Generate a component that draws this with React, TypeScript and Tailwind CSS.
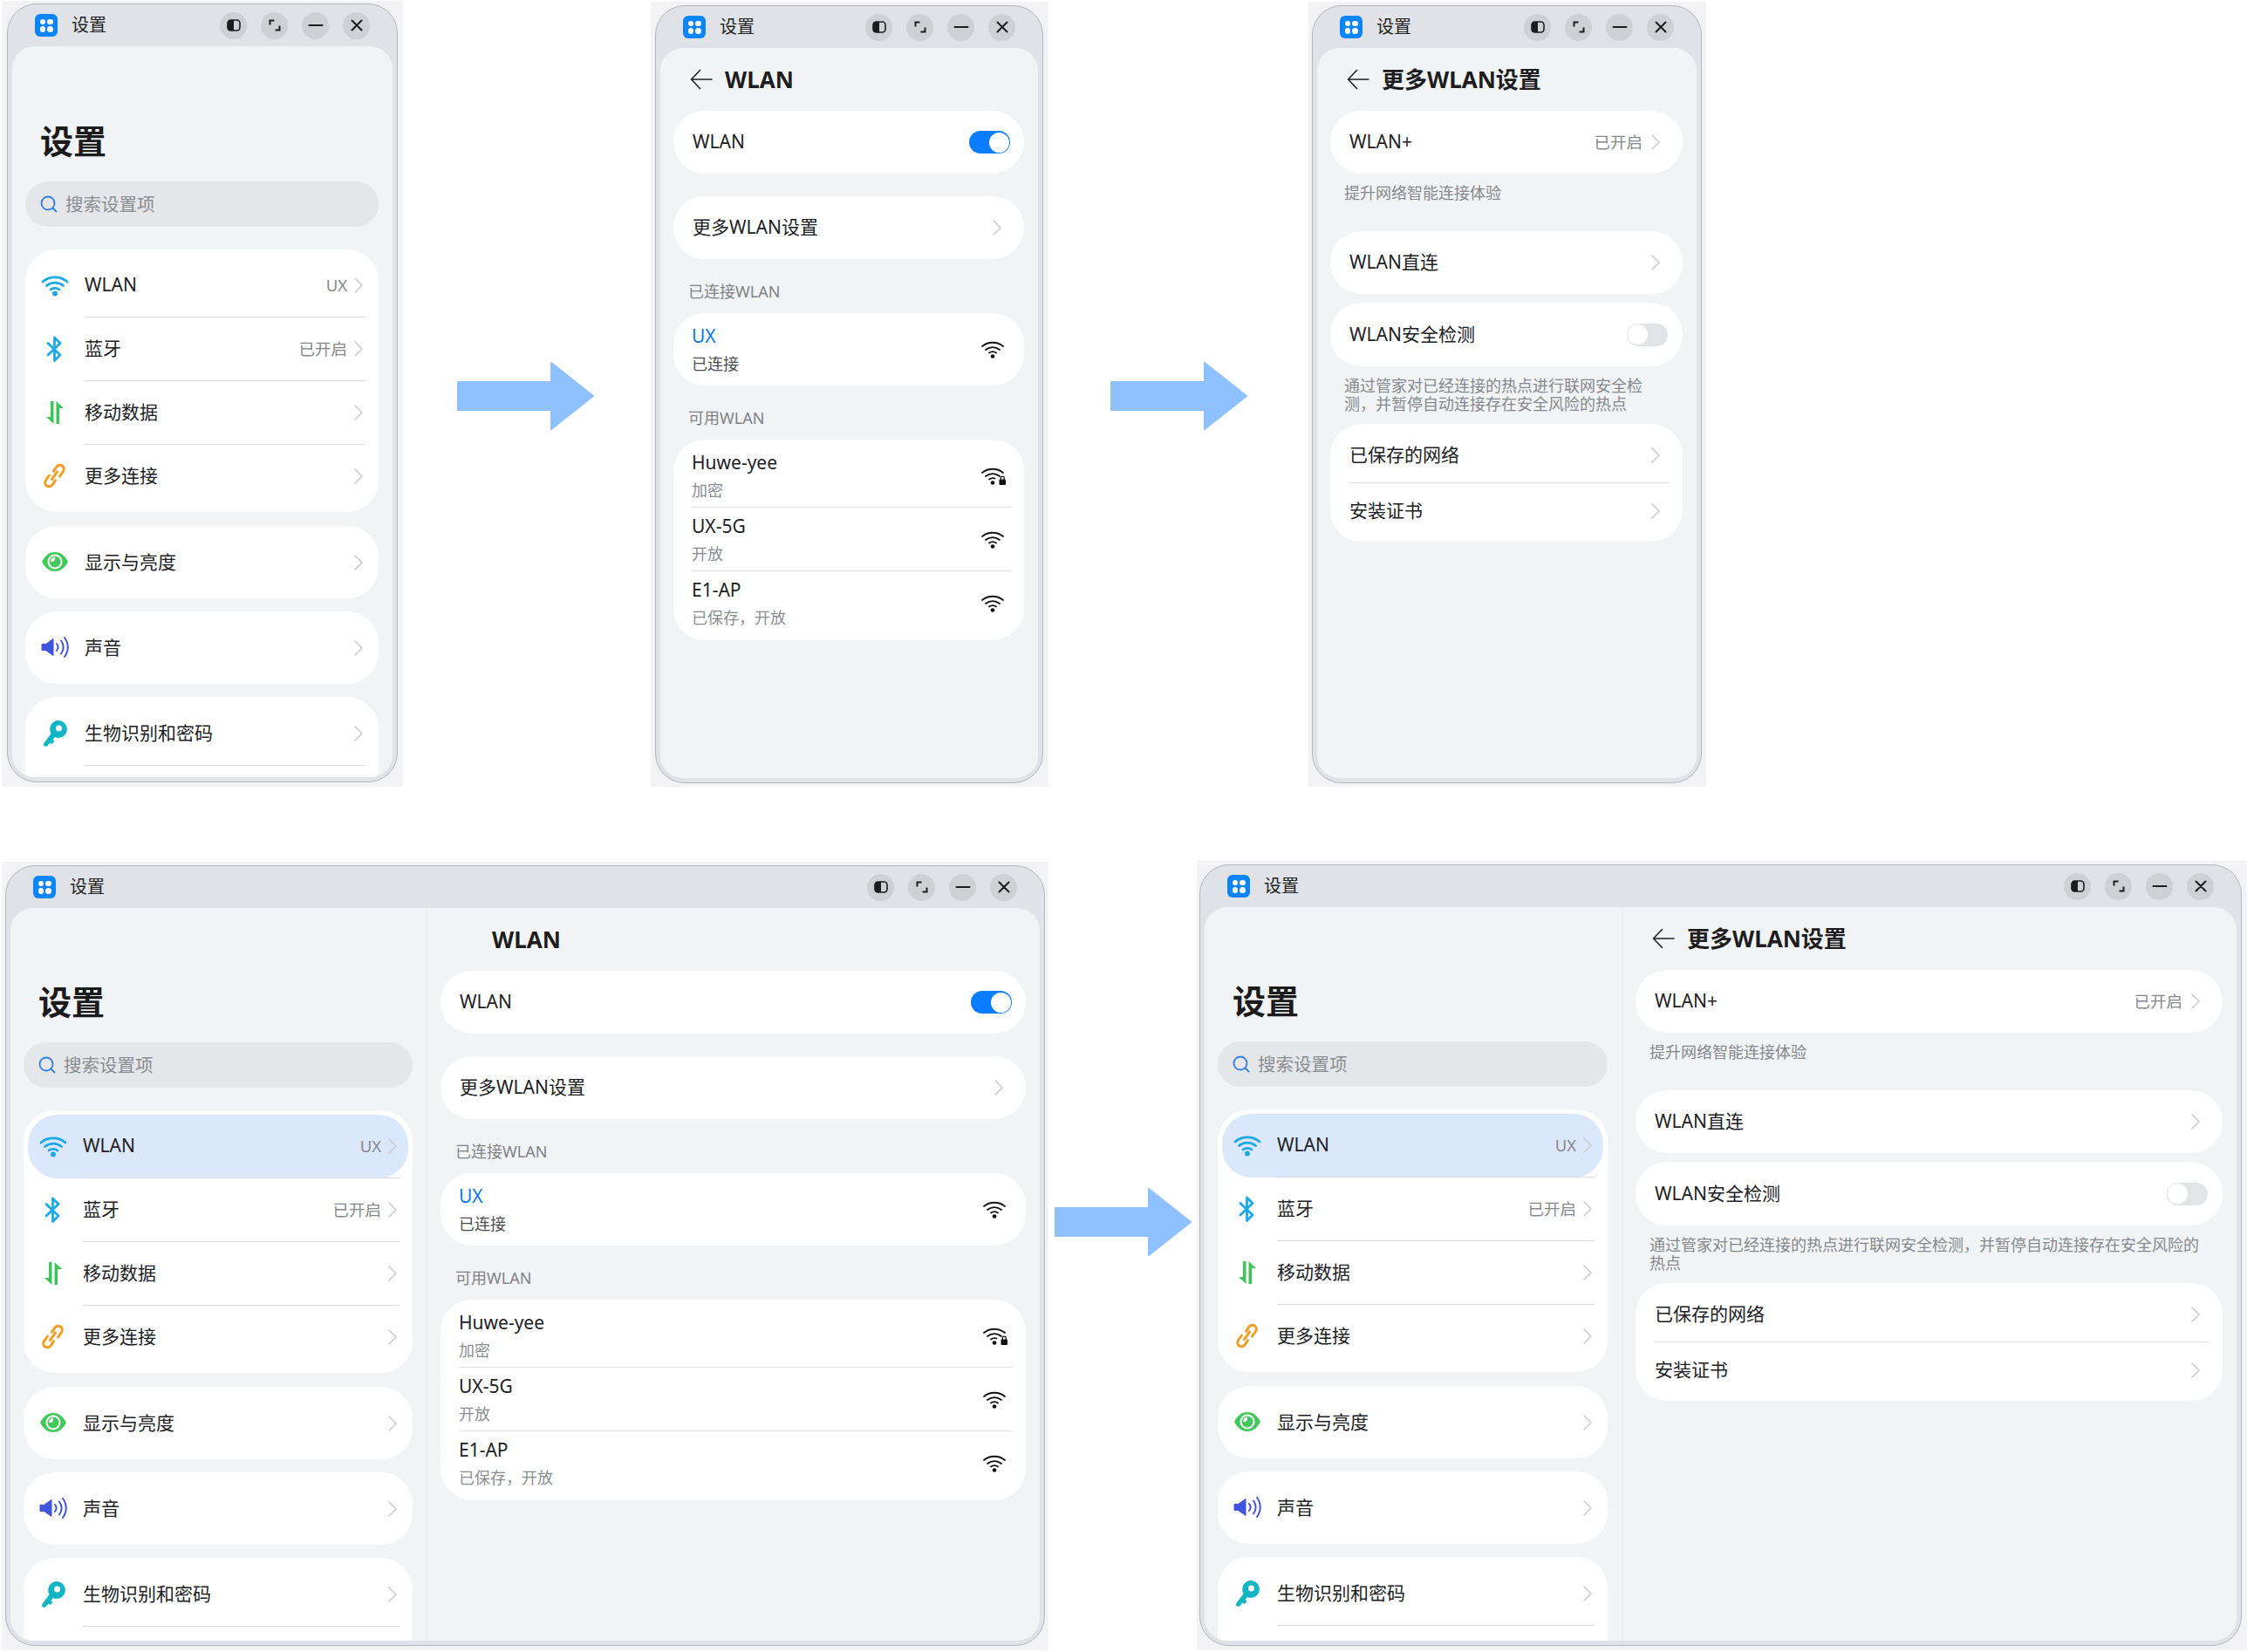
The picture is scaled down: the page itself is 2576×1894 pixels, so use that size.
import type { ReactNode } from 'react'

const Chevron = () => (
  <svg width="10" height="18" viewBox="0 0 10 18" fill="none" className="shrink-0">
    <path d="M1 1l8 8-8 8" stroke="#c9cacd" strokeWidth="1.5" strokeLinecap="round" strokeLinejoin="round" />
  </svg>
)

const Logo = () => (
  <div className="w-[26px] h-[26px] rounded-[6px] bg-[#0a84ff] grid grid-cols-2 gap-[1.5px] p-[5.5px] shrink-0">
    <span className="rounded-[4px] bg-white" />
    <span className="rounded-[4px] bg-white" />
    <span className="rounded-[4px] bg-white" />
    <span className="rounded-[4px] bg-white" />
  </div>
)

const WinButton = ({ children }: { children: ReactNode }) => (
  <div className="w-[31px] h-[31px] rounded-full bg-[#cfd0d4] flex items-center justify-center">
    <svg width="18" height="18" viewBox="0 0 18 18" fill="none" stroke="#1c1c1e" strokeWidth="2" strokeLinecap="round">
      {children}
    </svg>
  </div>
)

const TitleBar = () => (
  <div className="h-[48px] shrink-0 flex items-center pl-[31px] pr-[31px]">
    <Logo />
    <span className="ml-[16px] text-[20px] text-[#222] leading-none">设置</span>
    <div className="ml-auto flex gap-[16px]">
      <WinButton>
        <rect x="2" y="3" width="14" height="12" rx="3.500" strokeWidth="1.6" />
        <path d="M2 6.500A3.500 3.500 0 0 1 5.500 3H9v12H5.500A3.500 3.500 0 0 1 2 11.500z" fill="#1c1c1e" stroke="none" />
      </WinButton>
      <WinButton>
        <path d="M8.500 3.500h-5v5M9.500 14.500h5v-5" strokeLinecap="butt" strokeWidth="2" />
      </WinButton>
      <WinButton>
        <path d="M1.500 9h15" />
      </WinButton>
      <WinButton>
        <path d="M3.500 3.500l11 11M14.500 3.500l-11 11" />
      </WinButton>
    </div>
  </div>
)

const WifiColor = () => (
  <svg width="32" height="25" viewBox="0 0 32 25" fill="none" stroke="#1fa8e8" strokeWidth="2.800" strokeLinecap="round">
    <path d="M2 8C9.800 1.200 22.200 1.200 30 8" />
    <path d="M6.500 12.500c5.500-4.500 13.500-4.500 19 0" />
    <path d="M11 17c2.800-2.100 7.200-2.100 10 0" />
    <circle cx="16" cy="21.500" r="3" fill="#1fa8e8" stroke="none" />
  </svg>
)

const BluetoothIcon = () => (
  <svg width="19" height="30" viewBox="0 0 19 30" fill="none" stroke="#1da9e8" strokeWidth="2.800" strokeLinejoin="round" strokeLinecap="round">
    <path d="M2 8.500l14 13.500-6.500 6.500V2l6.500 6.500L2 22" />
  </svg>
)

const DataIcon = () => (
  <svg width="22" height="28" viewBox="0 0 22 28" fill="#3ec55a">
    <path d="M6 1h3.500v26L1 19h5z" />
    <path d="M12.500 27V1L21 9h-5v18z" />
  </svg>
)

const LinkIcon = () => (
  <svg width="27" height="29" viewBox="0 0 26 28" fill="none" stroke="#f39c1f" strokeWidth="2.800" strokeLinecap="round">
    <path d="M12 9l3-4.500c1.800-2.600 4.600-3 6.600-1.600s2.400 4.200.8 6.600l-3.600 5" />
    <path d="M14 19l-3 4.500c-1.800 2.600-4.600 3-6.600 1.600S2 21 3.600 18.500l3.600-5" />
    <path d="M10 18l6-8.500" />
  </svg>
)

const EyeIcon = () => (
  <svg width="30" height="24" viewBox="0 0 30 24">
    <path d="M0 12C4 4 9.500 1 15 1s11 3 15 11c-4 8-9.500 11-15 11S4 20 0 12z" fill="#42c95b" />
    <circle cx="15" cy="12" r="8.500" fill="#fff" />
    <circle cx="15" cy="12" r="6.500" fill="#42c95b" />
    <path d="M15 6.500a5.500 5.500 0 0 0-5 5.500h3.500a2 2 0 0 1 1.500-2z" fill="#fff" />
  </svg>
)

const SpeakerIcon = () => (
  <svg width="32" height="24" viewBox="0 0 32 24" fill="none">
    <path d="M1 8.500h4.500L14 2.500v19l-8.500-6H1z" fill="#3f55e0" stroke="#3f55e0" strokeLinejoin="round" />
    <path d="M18 8c2 2.500 2 5.500 0 8M23 4.500c3.500 4.500 3.500 10.500 0 15M27 1c5 6.500 5 15.500 0 22" stroke="#3f55e0" strokeWidth="2" strokeLinecap="round" />
  </svg>
)

const KeyIcon = () => (
  <svg width="28" height="30" viewBox="0 0 28 30" fill="#12b5c4">
    <path d="M18 0a10 10 0 0 1 3 19.500c-2.500.8-5 .6-7-.500l-2.500 3 2 2-3 3-2-1.500L5.500 29c-1.500 1.500-4.500 1-4.500-1.500 0-1 .5-1.800 1.200-2.500L9.500 15A10 10 0 0 1 18 0z" />
    <circle cx="18.500" cy="9" r="3.500" fill="#fff" />
  </svg>
)

const WifiBlack = ({ lock }: { lock?: boolean }) => (
  <svg width="30" height="22" viewBox="0 0 30 22" fill="none" stroke="#111" strokeWidth="1.800" strokeLinecap="round">
    <path d="M2 7C9 1.300 19 1.300 26 7" />
    <path d="M6 11c4.800-3.800 11.200-3.800 16 0" />
    {lock ? <path d="M10 14.500c2.200-1.500 4.500-1.800 6.500-1" /> : <path d="M10 14.500c2.600-1.800 5.400-1.800 8 0" />}
    <circle cx="14" cy="18.500" r="2.300" fill="#111" stroke="none" />
    {lock && (
      <>
        <rect x="21.500" y="14.500" width="7.500" height="6.500" rx="1" fill="#111" stroke="none" />
        <path d="M23.300 14.500v-1.500a1.950 1.950 0 0 1 3.900 0v1.500" strokeWidth="1.300" />
      </>
    )}
  </svg>
)

const SearchIcon = () => (
  <svg width="20" height="20" viewBox="0 0 20 20" fill="none" stroke="#2f7fe0" strokeWidth="1.800" strokeLinecap="round">
    <circle cx="9" cy="9" r="7.500" />
    <path d="M14.500 14.500l4 4" />
  </svg>
)

const BackArrow = () => (
  <svg width="26" height="24" viewBox="0 0 26 24" fill="none" stroke="#222" strokeWidth="1.600" strokeLinecap="round" strokeLinejoin="round">
    <path d="M25 12H1.500M11.500 1.500L1.500 12l10 10.500" />
  </svg>
)

const Toggle = ({ on }: { on: boolean }) =>
  on ? (
    <div className="w-[47px] h-[26px] rounded-full bg-[#0a7cff] flex items-center justify-end pr-[1.5px]">
      <span className="w-[23px] h-[23px] rounded-full bg-white" />
    </div>
  ) : (
    <div className="w-[47px] h-[26px] rounded-full bg-[#e3e4e7] flex items-center">
      <span className="w-[25px] h-[25px] rounded-full bg-white border border-[#e6e7ea]" />
    </div>
  )

const Card = ({ className, children }: { className?: string; children: ReactNode }) => (
  <div className={`bg-white rounded-[36px] ${className ?? ''}`}>{children}</div>
)

type NavRowProps = {
  icon: ReactNode
  label: string
  value?: string
  selected?: boolean
  divider?: boolean
  height?: string
}

const NavRow = ({ icon, label, value, selected, divider, height = 'h-[73px]' }: NavRowProps) => (
  <div className={`mx-[5px] flex items-center ${height} ${selected ? 'bg-[#dbe7fb] rounded-[34px]' : ''}`}>
    <div className="w-[57px] mr-[6px] shrink-0 flex items-center justify-center -mt-[1px]">{icon}</div>
    <div className={`flex-1 h-full mr-[10px] pr-[3px] flex items-center ${divider ? 'border-b border-[#d9dadd]' : ''}`}>
      <span className="text-[21px] text-[#202124]">{label}</span>
      {value && <span className="ml-auto mr-[8px] text-[18.5px] text-[#86898d]">{value}</span>}
      <span className={value ? '' : 'ml-auto'}>
        <Chevron />
      </span>
    </div>
  </div>
)

const Sidebar = ({ selected, top, width }: { selected?: boolean; top: string; width: string }) => (
  <div className={`${width} ${top} shrink-0 pl-[15px] pr-[16px]`}>
    <h1 className="ml-[17px] h-[44px] text-[38px] leading-[44px] font-bold text-[#1b1b1d]">设置</h1>
    <div className="mt-[25px] h-[52px] rounded-full bg-[#e5e6e9] flex items-center pl-[17px] gap-[9px]">
      <SearchIcon />
      <span className="text-[20.5px] text-[#8a8d91]">搜索设置项</span>
    </div>
    <Card className="mt-[26px] pt-[5px] pb-[5px]">
      <NavRow icon={<WifiColor />} label="WLAN" value="UX" divider selected={selected} />
      <NavRow icon={<BluetoothIcon />} label="蓝牙" value="已开启" divider />
      <NavRow icon={<DataIcon />} label="移动数据" divider />
      <NavRow icon={<LinkIcon />} label="更多连接" height="h-[72px]" />
    </Card>
    <Card className="mt-[16px]">
      <NavRow icon={<EyeIcon />} label="显示与亮度" height="h-[83px]" />
    </Card>
    <Card className="mt-[15px]">
      <NavRow icon={<SpeakerIcon />} label="声音" height="h-[83px]" />
    </Card>
    <Card className="mt-[15px] rounded-b-none pt-[5px] h-[140px]">
      <NavRow icon={<KeyIcon />} label="生物识别和密码" divider height="h-[74px]" />
    </Card>
  </div>
)

const Header = ({ title, back = true }: { title: string; back?: boolean }) => (
  <div className="h-[72px] pl-[19px] flex items-center">
    <div className="w-[40px] shrink-0">{back && <BackArrow />}</div>
    <h2 className="text-[26px] font-bold text-[#1d1d1f]">{title}</h2>
  </div>
)

const SectionLabel = ({ children }: { children: ReactNode }) => (
  <div className="h-[62px] flex items-end pb-[13px] pl-[17px] text-[18px] leading-[24px] text-[#7f8286]">{children}</div>
)

const SimpleRow = ({ label, value, height = 'h-[72px]' }: { label: string; value?: string; height?: string }) => (
  <div className={`${height} pl-[22px] pr-[26px] flex items-center`}>
    <span className="text-[21px] text-[#202124]">{label}</span>
    {value && <span className="ml-auto mr-[10px] text-[18.5px] text-[#86898d]">{value}</span>}
    <span className={value ? '' : 'ml-auto'}>
      <Chevron />
    </span>
  </div>
)

const Network = ({ name, status, lock, divider }: { name: string; status: string; lock?: boolean; divider?: boolean }) => (
  <div className="h-[73px] ml-[21px] mr-[15px] flex items-center relative">
    <div className="flex flex-col gap-[8px]">
      <span className="text-[21px] leading-[24px] text-[#202124]">{name}</span>
      <span className="text-[18px] leading-[24px] text-[#8a8d91]">{status}</span>
    </div>
    <div className="ml-auto mr-[5px]">
      <WifiBlack lock={lock} />
    </div>
    {divider && <span className="absolute left-0 right-0 bottom-0 h-px bg-[#dfe0e3]" />}
  </div>
)

const WlanPane = ({ back = true }: { back?: boolean }) => (
  <div className="flex-1 min-w-0 pl-[15px] pr-[16px]">
    <Header title="WLAN" back={back} />
    <Card className="h-[72px] pl-[22px] pr-[16px] flex items-center justify-between">
      <span className="text-[21px] text-[#202124]">WLAN</span>
      <Toggle on />
    </Card>
    <Card className="mt-[26px]">
      <SimpleRow label="更多WLAN设置" />
    </Card>
    <SectionLabel>已连接WLAN</SectionLabel>
    <Card className="h-[83px] pl-[21px] pr-[20px] flex items-center justify-between">
      <div className="flex flex-col gap-[8px]">
        <span className="text-[21px] leading-[24px] text-[#0a7ae6]">UX</span>
        <span className="text-[18px] leading-[24px] text-[#4b4d50]">已连接</span>
      </div>
      <WifiBlack />
    </Card>
    <SectionLabel>可用WLAN</SectionLabel>
    <Card className="pt-[5px] pb-[6px]">
      <Network name="Huwe-yee" status="加密" lock divider />
      <Network name="UX-5G" status="开放" divider />
      <Network name="E1-AP" status="已保存，开放" />
    </Card>
  </div>
)

const Note = ({ children, height }: { children: ReactNode; height: string }) => (
  <p className={`${height} pt-[12px] pl-[16px] pr-[16px] text-[18px] leading-[21px] text-[#85888c]`}>{children}</p>
)

const MorePane = () => (
  <div className="flex-1 min-w-0 pl-[15px] pr-[16px]">
    <Header title="更多WLAN设置" />
    <Card>
      <SimpleRow label="WLAN+" value="已开启" />
    </Card>
    <Note height="h-[66px]">提升网络智能连接体验</Note>
    <Card>
      <SimpleRow label="WLAN直连" />
    </Card>
    <Card className="mt-[10px] h-[73px] pl-[22px] pr-[17px] flex items-center justify-between">
      <span className="text-[21px] text-[#202124]">WLAN安全检测</span>
      <Toggle on={false} />
    </Card>
    <Note height="h-[66px]">通过管家对已经连接的热点进行联网安全检测，并暂停自动连接存在安全风险的热点</Note>
    <Card className="pb-[2px]">
      <div className="relative">
        <SimpleRow label="已保存的网络" height="h-[68px] pt-[4px]" />
        <span className="absolute left-[21px] right-[15px] bottom-0 h-px bg-[#dfe0e3]" />
      </div>
      <SimpleRow label="安装证书" height="h-[65px] pb-[2px]" />
    </Card>
  </div>
)

const Window = ({ frame, children }: { frame: string; children: ReactNode }) => (
  <div className={`absolute bg-[#f3f3f5] ${frame}`}>
    <div className="w-full h-full rounded-[34px] border-[1.5px] border-[#b3b6bd] bg-[#e0e2e8] flex flex-col overflow-hidden">
      <TitleBar />
      <div className="flex-1 min-h-0 mx-[5px] mb-[5px] rounded-t-[26px] rounded-b-[26px] bg-[#f1f3f5] flex overflow-hidden">{children}</div>
    </div>
  </div>
)

const FlowArrow = ({ place }: { place: string }) => (
  <svg className={`absolute ${place}`} width="157" height="78" viewBox="0 0 157 78" fill="#8fc1ff" stroke="#8fc1ff" strokeWidth="2" strokeLinejoin="round">
    <path d="M1 23h107V1l48 38-48 38V55H1z" />
  </svg>
)

export default function App() {
  return (
    <div className="relative w-[2576px] h-[1894px] bg-white overflow-hidden font-['Noto_Sans','Noto_Sans_CJK_SC',sans-serif]">
      <Window frame="left-[2px] top-[1px] w-[460px] h-[901px] pl-[6px] pr-[6px] pt-[3px] pb-[5px]">
        <Sidebar top="pt-[86px]" width="w-full" />
      </Window>
      <FlowArrow place="left-[524px] top-[415px]" />

      <Window frame="left-[746px] top-[2px] w-[456px] h-[900px] pl-[5px] pr-[6px] pt-[4px] pb-[4px]">
        <WlanPane />
      </Window>
      <FlowArrow place="left-[1273px] top-[415px]" />

      <Window frame="left-[1500px] top-[2px] w-[456px] h-[900px] pl-[4px] pr-[5px] pt-[4px] pb-[4px]">
        <MorePane />
      </Window>

      <Window frame="left-[2px] top-[988px] w-[1200px] h-[904px] pl-[4px] pr-[4px] pt-[4px] pb-[5px]">
        <Sidebar selected top="pt-[85px]" width="w-[477px]" />
        <div className="w-px bg-[#e7e8eb] shrink-0" />
        <WlanPane back={false} />
      </Window>
      <FlowArrow place="left-[1209px] top-[1362px]" />

      <Window frame="left-[1372px] top-[987px] w-[1204px] h-[905px] pl-[3px] pr-[6px] pt-[4px] pb-[5px]">
        <Sidebar selected top="pt-[85px]" width="w-[478px]" />
        <div className="w-px bg-[#e7e8eb] shrink-0" />
        <MorePane />
      </Window>
    </div>
  )
}
